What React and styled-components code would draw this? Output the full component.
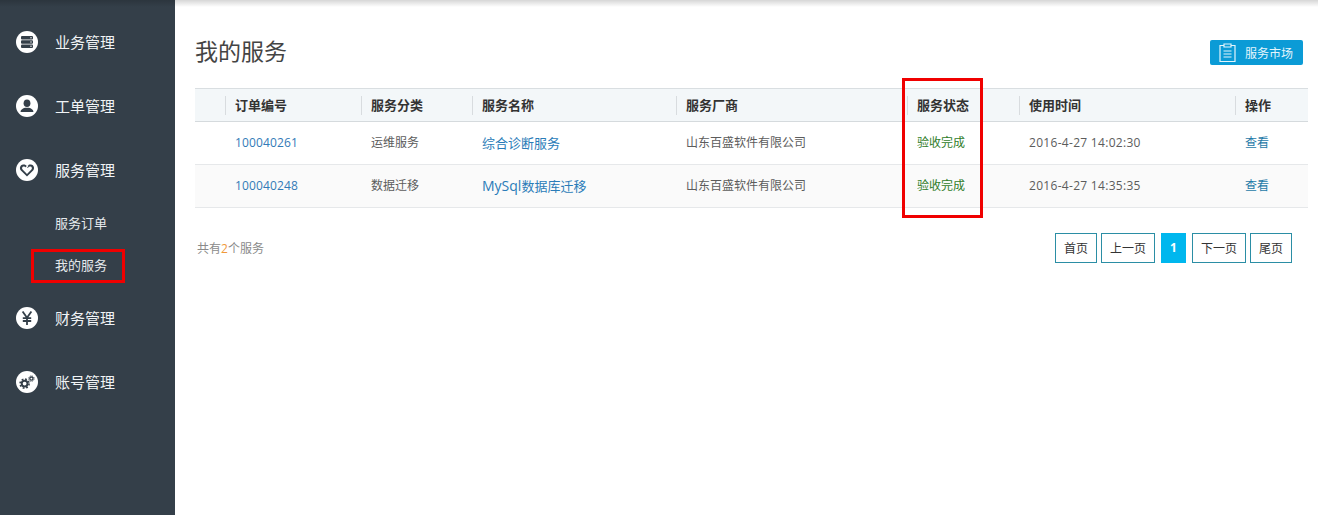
import React from "react";
import styled, { createGlobalStyle } from "styled-components";

const GlobalStyle = createGlobalStyle`
  html, body {
    margin: 0;
    padding: 0;
    height: 100%;
    background: #fff;
    font-family: "Open Sans", "Noto Sans CJK SC", sans-serif;
  }
  * { box-sizing: border-box; }
`;

const Page = styled.div`
  position: relative;
  display: flex;
  width: 100%;
  height: 515px;
  overflow: hidden;
`;

const TopShade = styled.div`
  position: absolute;
  top: 0;
  left: 0;
  right: 0;
  height: 7px;
  background: linear-gradient(to bottom, rgba(0, 0, 0, 0.16), rgba(0, 0, 0, 0));
`;

const Sidebar = styled.nav`
  flex: 0 0 175px;
  padding-top: 9px;
  background: #343f49;
`;

const NavItem = styled.div`
  display: flex;
  align-items: center;
  height: 64px;
  padding-left: 16px;
  color: #f0f3f5;
  font-size: 15px;
`;

const NavIcon = styled.svg`
  flex: 0 0 22px;
  width: 22px;
  height: 22px;
  margin-top: 1px;
  margin-right: 17px;
`;

const SubItem = styled.div`
  height: 42px;
  padding-left: 55px;
  line-height: 44px;
  color: #e6eaed;
  font-size: 13px;
`;

const Main = styled.main`
  flex: 1;
  padding: 0 10px 0 20px;
`;

const TitleRow = styled.div`
  display: flex;
  align-items: flex-start;
  justify-content: space-between;
  height: 88px;
  padding: 40px 5px 0 0;
`;

const Title = styled.h1`
  margin: -4px 0 0;
  color: #444;
  font-size: 23px;
  font-weight: 400;
  line-height: 30px;
`;

const MarketButton = styled.div`
  display: flex;
  align-items: center;
  width: 93px;
  height: 25px;
  padding-left: 9px;
  border-radius: 2px;
  background: #0b9bd6;
  color: #e4f5fc;
  font-size: 12px;
`;

const ClipIcon = styled.svg`
  width: 17px;
  height: 19px;
  margin-right: 9px;
`;

const Table = styled.table`
  width: 1113px;
  border-collapse: collapse;
  table-layout: fixed;
`;

const Head = styled.th`
  height: 33px;
  padding: 0;
  border-top: 1px solid #d9dee1;
  border-bottom: 1px solid #d5dadd;
  background: #f3f7f9;
  color: #333;
  font-size: 13px;
  font-weight: 700;
  text-align: left;
`;

const HeadLabel = styled.div`
  height: 19px;
  margin-left: -1px;
  padding-left: 9px;
  border-left: 1px solid #d8dcdf;
  line-height: 19px;
`;

const Row = styled.tr`
  background: ${props => (props.$striped ? "#fafafa" : "#fff")};
`;

const Cell = styled.td`
  height: 43px;
  padding: 0 0 2px 9px;
  border-bottom: 1px solid #e6e8ea;
  color: ${props => props.$color || "#5c5c5c"};
  font-size: ${props => props.$size || 12}px;
  letter-spacing: ${props => props.$spacing || 0}px;
  white-space: nowrap;
`;

const LatinName = styled.span`
  font-size: 14px;
`;

const Footer = styled.div`
  display: flex;
  align-items: center;
  justify-content: space-between;
  height: 30px;
  margin-top: 25px;
  padding: 0 16px 0 2px;
`;

const Total = styled.div`
  margin-top: -1px;
  color: #8a8a8a;
  font-size: 12px;
`;

const TotalCount = styled.span`
  color: #f0983a;
`;

const Pager = styled.div`
  display: flex;
`;

const PageButton = styled.div`
  display: flex;
  align-items: center;
  justify-content: center;
  width: ${props => props.$width}px;
  height: 30px;
  margin-left: ${props => props.$gap}px;
  padding-bottom: 1px;
  border: 1px solid ${props => (props.$active ? "#00b7ee" : "#2b8ea5")};
  background: ${props => (props.$active ? "#00b7ee" : "#fff")};
  color: ${props => (props.$active ? "#fff" : "#333")};
  font-size: 12px;
  font-weight: ${props => (props.$active ? 700 : 400)};
`;

const Marker = styled.div`
  position: absolute;
  left: ${props => props.$left}px;
  top: ${props => props.$top}px;
  width: ${props => props.$width}px;
  height: ${props => props.$height}px;
  border: 3px solid #f00000;
`;

const ServerIcon = () => (
  <NavIcon viewBox="0 0 22 22">
    <circle cx="11" cy="11" r="11" fill="#fff" />
    <rect x="5" y="5" width="12" height="3.4" rx="1" fill="#343f49" />
    <rect x="5" y="9.3" width="12" height="3.4" rx="1" fill="#343f49" />
    <rect x="5" y="13.6" width="12" height="3.4" rx="1" fill="#343f49" />
    <circle cx="15" cy="6.7" r="0.7" fill="#fff" />
    <circle cx="15" cy="11" r="0.7" fill="#fff" />
    <circle cx="15" cy="15.3" r="0.7" fill="#fff" />
  </NavIcon>
);

const UserIcon = () => (
  <NavIcon viewBox="0 0 22 22">
    <circle cx="11" cy="11" r="11" fill="#fff" />
    <ellipse cx="11" cy="8.3" rx="3.4" ry="3.8" fill="#343f49" />
    <path d="M4.6 17c0-2.7 2.4-3.4 4.4-4.2h4c2 .8 4.4 1.5 4.4 4.2z" fill="#343f49" />
  </NavIcon>
);

const HeartIcon = () => (
  <NavIcon viewBox="0 0 22 22">
    <circle cx="11" cy="11" r="11" fill="#fff" />
    <path
      d="M11 17.6 4.9 11.6C3 9.5 4 5.9 7.1 5.5c1.6-.2 3 .5 3.9 1.7.9-1.2 2.3-1.9 3.9-1.7 3.1.4 4.1 4 2.2 6.1z"
      fill="#343f49"
    />
    <path
      d="M11 14.9 6.6 10.6c-1-1.1-.5-3 1-3.1 1-.1 1.8.4 2.4 1.2l2 .1c.6-.9 1.4-1.4 2.4-1.3 1.5.1 2 2 1 3.1z"
      fill="#fff"
    />
    <path d="M12 6.4 9.2 10l2 2" fill="none" stroke="#fff" strokeWidth="1.3" />
  </NavIcon>
);

const YenIcon = () => (
  <NavIcon viewBox="0 0 22 22">
    <circle cx="11" cy="11" r="11" fill="#fff" />
    <path
      d="M6.6 4.6 11 10.8l4.4-6.2M6.8 11.2h8.4M6.8 14h8.4M11 10.8V18"
      fill="none"
      stroke="#343f49"
      strokeWidth="1.8"
    />
  </NavIcon>
);

const GearsIcon = () => (
  <NavIcon viewBox="0 0 22 22">
    <circle cx="11" cy="11" r="11" fill="#fff" />
    <circle cx="8.6" cy="12.6" r="2.9" fill="none" stroke="#343f49" strokeWidth="2" />
    <circle
      cx="8.6"
      cy="12.6"
      r="4.5"
      fill="none"
      stroke="#343f49"
      strokeWidth="1.6"
      strokeDasharray="1.8 1.73"
    />
    <circle cx="15.4" cy="7.6" r="1.6" fill="none" stroke="#343f49" strokeWidth="1.3" />
    <circle
      cx="15.4"
      cy="7.6"
      r="2.7"
      fill="none"
      stroke="#343f49"
      strokeWidth="1"
      strokeDasharray="1.1 1.02"
    />
  </NavIcon>
);

const columns = [
  { width: 31, label: "" },
  { width: 136, label: "订单编号" },
  { width: 111, label: "服务分类" },
  { width: 204, label: "服务名称" },
  { width: 231, label: "服务厂商" },
  { width: 112, label: "服务状态" },
  { width: 216, label: "使用时间" },
  { width: 72, label: "操作" },
];

const orders = [
  {
    id: "100040261",
    type: "运维服务",
    name: "综合诊断服务",
    time: "2016-4-27 14:02:30",
  },
  {
    id: "100040248",
    type: "数据迁移",
    latin: "MySql",
    name: "数据库迁移",
    time: "2016-4-27 14:35:35",
  },
];

const pages = [
  { label: "首页", width: 42, gap: 0 },
  { label: "上一页", width: 54, gap: 4 },
  { label: "1", width: 25, gap: 6, active: true },
  { label: "下一页", width: 54, gap: 6 },
  { label: "尾页", width: 42, gap: 4 },
];

const App = () => (
  <Page>
    <GlobalStyle />
    <Sidebar>
      <NavItem><ServerIcon />业务管理</NavItem>
      <NavItem><UserIcon />工单管理</NavItem>
      <NavItem><HeartIcon />服务管理</NavItem>
      <SubItem>服务订单</SubItem>
      <SubItem>我的服务</SubItem>
      <NavItem><YenIcon />财务管理</NavItem>
      <NavItem><GearsIcon />账号管理</NavItem>
    </Sidebar>
    <Main>
      <TitleRow>
        <Title>我的服务</Title>
        <MarketButton>
          <ClipIcon viewBox="0 0 17 19">
            <path
              d="M5 2.5H1v16h15v-16h-4M5 1h7v3H5zM4.5 8h8M4.5 11h8M4.5 14h8"
              fill="none"
              stroke="#e4f5fc"
              strokeWidth="1.2"
            />
          </ClipIcon>
          服务市场
        </MarketButton>
      </TitleRow>
      <Table>
        <colgroup>
          {columns.map((col, index) => (
            <col key={index} width={col.width} />
          ))}
        </colgroup>
        <thead>
          <tr>
            {columns.map((col, index) => (
              <Head key={index}>
                {col.label && <HeadLabel>{col.label}</HeadLabel>}
              </Head>
            ))}
          </tr>
        </thead>
        <tbody>
          {orders.map((order, index) => (
            <Row key={order.id} $striped={index === 1}>
              <Cell />
              <Cell $color="#337ab7" $spacing={0.15}>{order.id}</Cell>
              <Cell>{order.type}</Cell>
              <Cell $color="#2a7cb8" $size={13}>
                {order.latin && <LatinName>{order.latin}</LatinName>}
                {order.name}
              </Cell>
              <Cell>山东百盛软件有限公司</Cell>
              <Cell $color="#2f7d2a">验收完成</Cell>
              <Cell $spacing={0.3}>{order.time}</Cell>
              <Cell $color="#1f7aa8">查看</Cell>
            </Row>
          ))}
        </tbody>
      </Table>
      <Footer>
        <Total>共有<TotalCount>2</TotalCount>个服务</Total>
        <Pager>
          {pages.map(page => (
            <PageButton
              key={page.label}
              $width={page.width}
              $gap={page.gap}
              $active={page.active}
            >
              {page.label}
            </PageButton>
          ))}
        </Pager>
      </Footer>
    </Main>
    <TopShade />
    <Marker $left={31} $top={249} $width={94} $height={34} />
    <Marker $left={902} $top={78} $width={81} $height={140} />
  </Page>
);

export default App;
